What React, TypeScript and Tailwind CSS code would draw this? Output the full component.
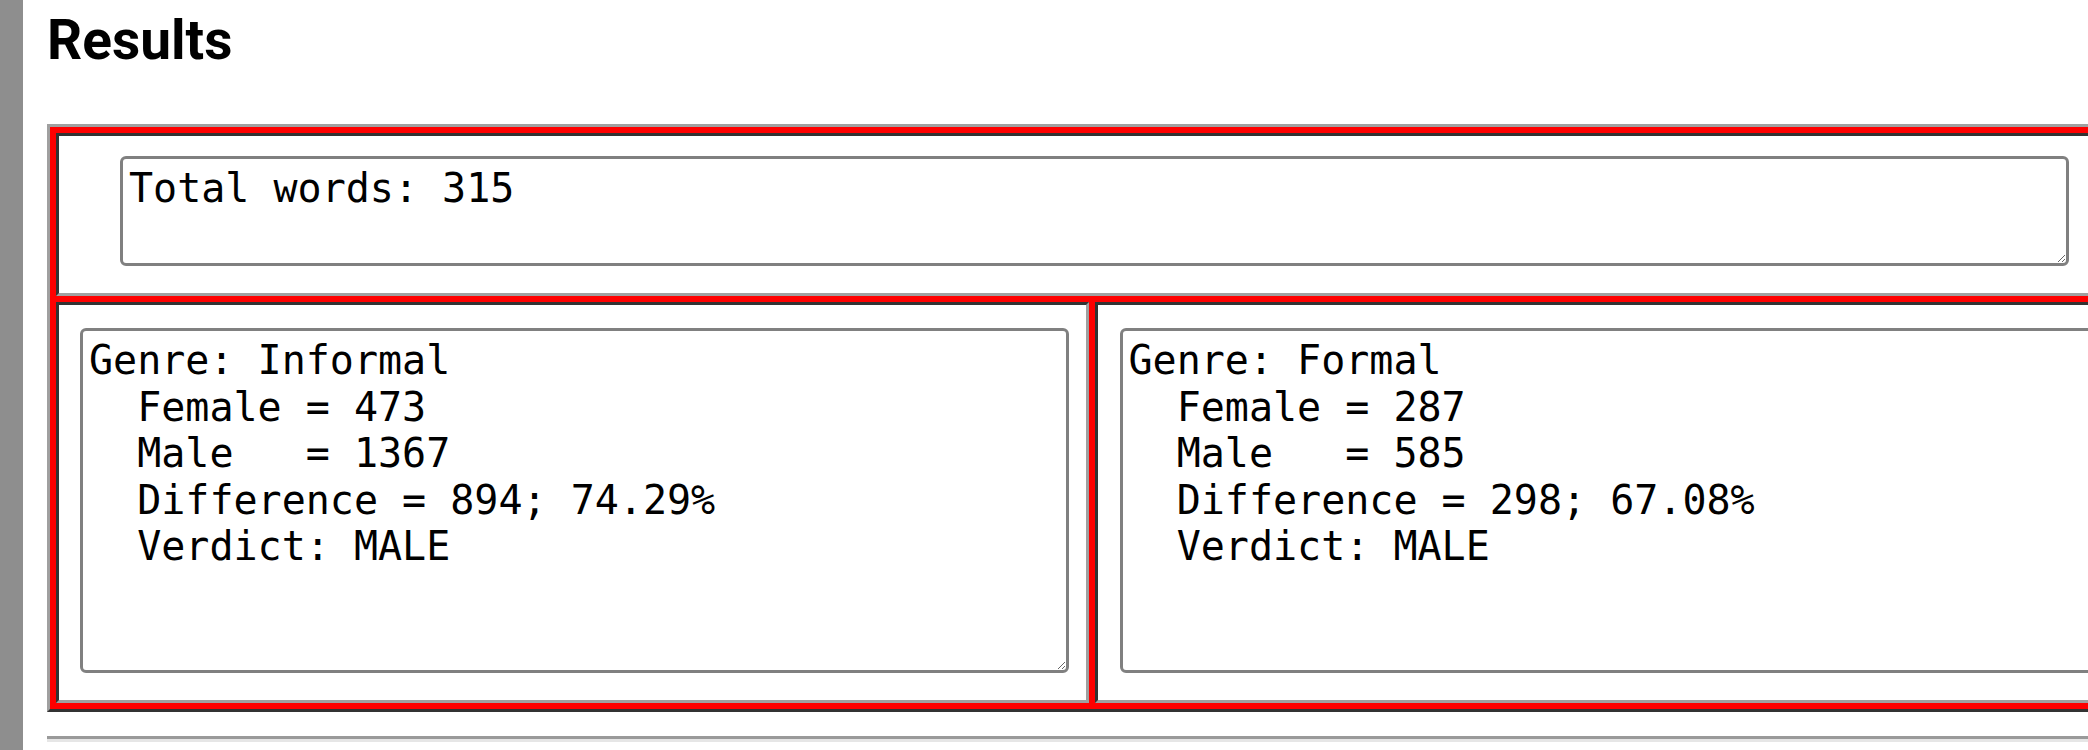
import React from 'react'

const mono = "font-['DejaVu_Sans_Mono',monospace] text-[40px] leading-[46.6px]"

const cellBorder =
  'border-[3px] border-t-[#333333] border-l-[#333333] border-b-[#a0a0a0] border-r-[#a0a0a0] bg-white'

const genres = [
  {
    name: 'Informal',
    female: 473,
    male: 1367,
    diff: '894; 74.29%',
    verdict: 'MALE',
  },
  {
    name: 'Formal',
    female: 287,
    male: 585,
    diff: '298; 67.08%',
    verdict: 'MALE',
  },
]

function Box({ value, className }: { value: string; className: string }) {
  return (
    <textarea
      readOnly
      value={value}
      className={`${mono} ${className} block rounded-[6px] border-[3px] border-[#808080] bg-white p-[6px] text-black outline-none`}
    />
  )
}

export default function App() {
  return (
    <div className="flex h-[750px] w-[2088px] overflow-hidden bg-white">
      <div className="w-[23px] shrink-0 bg-[#8e8e8e]" />
      <div className="shrink-0 pl-[24px]">
        <h2 className="mt-[13px] font-['Roboto',sans-serif] text-[55px] font-bold leading-[55px] text-black">
          Results
        </h2>

        <div className="mt-[56px] w-[2089px] border-[3px] border-t-[#a0a0a0] border-l-[#a0a0a0] border-b-[#333333] border-r-[#333333] bg-[#ff0000] p-[6px]">
          <div className="grid grid-cols-2 gap-[6px]">
            <div className={`${cellBorder} col-span-2 h-[163px] pl-[61px] pt-[20px]`}>
              <Box value="Total words: 315" className="h-[110px] w-[1949px]" />
            </div>
            {genres.map((g, i) => (
              <div
                key={g.name}
                className={`${cellBorder} h-[401px] pt-[23px] ${i === 0 ? 'pl-[21px]' : 'pl-[22px]'}`}
              >
                <Box
                  value={`Genre: ${g.name}\n  Female = ${g.female}\n  Male   = ${g.male}\n  Difference = ${g.diff}\n  Verdict: ${g.verdict}`}
                  className="h-[345px] w-[989px]"
                />
              </div>
            ))}
          </div>
        </div>

        <div className="mt-[24px] h-[6px] w-[2100px] border-t-[3px] border-b-[3px] border-t-[#9a9a9a] border-b-[#e6e6e6]" />
      </div>
    </div>
  )
}
